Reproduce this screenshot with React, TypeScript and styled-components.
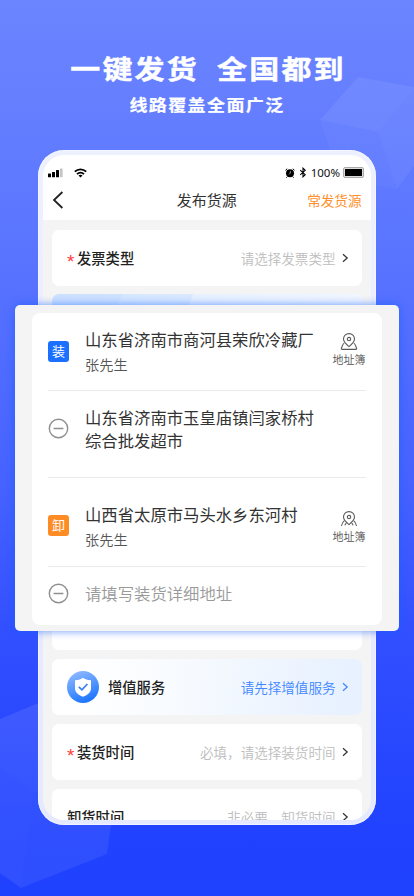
import React from "react";
import styled, { createGlobalStyle } from "styled-components";

const Global = createGlobalStyle`
  *, *::before, *::after { box-sizing: border-box; }
  html, body { margin: 0; padding: 0; }
  body { font-family: "Noto Sans CJK SC", sans-serif; }
`;

const Poster = styled.main`
  position: relative;
  width: 414px;
  height: 896px;
  overflow: hidden;
  display: flex;
  flex-direction: column;
  align-items: center;
  background: linear-gradient(180deg, #6b84ff 0%, #647eff 13%, #5873ff 30%, #4561ff 55%, #3350ff 70%, #2143ff 92%, #1f42ff 100%);
`;

const Backdrop = styled.svg`
  position: absolute;
  inset: 0;
`;

const Heading = styled.header`
  position: relative;
  height: 150px;
  width: 100%;
  padding-top: 49px;
  display: flex;
  flex-direction: column;
  align-items: center;
  color: #fff;
`;

const Title = styled.h1`
  margin: 0;
  display: flex;
  gap: 18px;
  font-size: 30px;
  line-height: 38px;
  font-weight: 700;
  letter-spacing: 2.2px;
  white-space: nowrap;
  transform: translateX(1px) scaleY(0.87);
  -webkit-text-stroke: 0.5px #fff;
`;

const Subtitle = styled.h2`
  margin: 0;
  font-size: 18px;
  line-height: 34px;
  font-weight: 700;
  letter-spacing: 1.4px;
  white-space: nowrap;
  transform: scaleY(0.9);
  -webkit-text-stroke: 0.25px #fff;
`;

const Phone = styled.section`
  position: relative;
  width: 338px;
  height: 675px;
  padding: 5px;
  border-radius: 26px;
  background: linear-gradient(180deg, #edf0ff, #e5e9ff);
  box-shadow: inset 0 0 1px 0.5px rgba(255, 255, 255, 0.85);
`;

const Screen = styled.div`
  height: 100%;
  border-radius: 21px;
  overflow: hidden;
  background: #f4f4f4;
`;

const TopArea = styled.div`
  height: 65px;
  background: #fff;
`;

const StatusBar = styled.div`
  height: 35px;
  padding: 0 7px 0 5px;
  display: flex;
  justify-content: space-between;
  align-items: center;
`;

const StatusGroup = styled.div<{ $gap: number }>`
  display: flex;
  align-items: center;
  gap: ${(p) => p.$gap}px;
  height: 18px;
  font: 11px/18px "Noto Sans", sans-serif;
  color: #111;
  svg { display: block; }
`;

const NavBar = styled.div`
  height: 26px;
  display: grid;
  grid-template-columns: 64px 1fr 64px;
  align-items: center;
  padding: 0 9.5px 0 9px;
  margin-top: -3px;
`;

const NavTitle = styled.div`
  text-align: center;
  font-size: 15px;
  line-height: 24px;
  color: #333;
`;

const NavLink = styled.div`
  font-size: 13.6px;
  line-height: 24px;
  color: #ff8f2c;
  white-space: nowrap;
  justify-self: end;
`;

const Percent = styled.span`
  font-size: 11.5px;
  margin-right: -1px;
`;

const Form = styled.div`
  padding: 10px 9px 0;
  display: flex;
  flex-direction: column;
  gap: 9px;
`;

const Card = styled.div<{ $tint?: boolean }>`
  width: 310px;
  height: 56px;
  flex: none;
  padding: 0 13px 0 15px;
  border-radius: 7px;
  background: ${(p) => (p.$tint ? "linear-gradient(100deg, #fff 10%, #f6faff 45%, #e8f1ff 92%)" : "#fff")};
  display: flex;
  align-items: center;
`;

const RouteCard = styled.div`
  height: 356px;
  margin-top: -1px;
  border-radius: 7px;
  overflow: hidden;
  background: #fff;
  svg { display: block; }
`;

const Star = styled.span`
  width: 10px;
  font-family: "Liberation Sans", sans-serif;
  font-size: 19px;
  line-height: 20px;
  padding-top: 7px;
  color: #ff3b3b;
`;

const Label = styled.span`
  font-size: 14.3px;
  line-height: 22px;
  font-weight: 500;
  color: #222;
`;

const Value = styled.span<{ $blue?: boolean }>`
  margin-left: auto;
  margin-right: 6.5px;
  font-size: 13.55px;
  line-height: 22px;
  font-weight: 350;
  color: ${(p) => (p.$blue ? "#3f87ff" : "#bdbdbd")};
  white-space: pre;
`;

const Shield = styled.svg`
  margin-right: 9px;
  flex: none;
`;

const Overlay = styled.section`
  position: absolute;
  left: 15px;
  top: 305px;
  width: 384px;
  height: 326px;
  padding: 8px 17px 6px;
  border-radius: 5px;
  background: #f4f4f4;
  box-shadow: 0 0 9px rgba(20, 95, 255, 0.65);
`;

const Panel = styled.div`
  height: 312px;
  border-radius: 8px;
  background: #fff;
  padding: 0 16px;
`;

const Stop = styled.div<{ $h: number; $pad: number; $line?: boolean }>`
  height: ${(p) => p.$h}px;
  padding-top: ${(p) => p.$pad}px;
  border-bottom: ${(p) => (p.$line ? "1px solid #ebebeb" : "0")};
  display: grid;
  grid-template-columns: 37px 1fr 34px;
  align-items: start;
`;

const Tag = styled.div<{ $color: string; $top: number }>`
  width: 21px;
  height: 21px;
  margin-top: ${(p) => p.$top}px;
  border-radius: 3px;
  background: ${(p) => p.$color};
  color: #fff;
  font-size: 13px;
  line-height: 20px;
  text-align: center;
`;

const Minus = styled.svg<{ $top: number }>`
  margin-top: ${(p) => p.$top}px;
`;

const Address = styled.div<{ $muted?: boolean }>`
  font-size: 16.35px;
  line-height: 22.5px;
  color: ${(p) => (p.$muted ? "#999" : "#333")};
  font-weight: ${(p) => (p.$muted ? 350 : 400)};
  white-space: nowrap;
`;

const Contact = styled.div`
  margin-top: 2px;
  font-size: 14.2px;
  line-height: 22px;
  font-weight: 350;
  color: #555;
`;

const Book = styled.div<{ $top: number }>`
  margin-top: ${(p) => p.$top}px;
  display: flex;
  flex-direction: column;
  align-items: center;
  font-size: 11px;
  line-height: 18px;
  font-weight: 350;
  color: #555;
  white-space: nowrap;
  svg { display: block; }
`;

const Chevron = ({ color = "#333" }: { color?: string }) => (
  <svg width="7" height="10" viewBox="0 0 7 10" fill="none">
    <path d="M1 1.2 5.2 5 1 8.8" stroke={color} strokeWidth="1.25" />
  </svg>
);

const MinusIcon = ({ top }: { top: number }) => (
  <Minus $top={top} width="21" height="21" viewBox="0 0 21 21" fill="none" stroke="#8f8f8f">
    <circle cx="10.5" cy="10.5" r="9.2" strokeWidth="1.4" />
    <path d="M5.6 10.5h9.8" strokeWidth="1.5" />
  </Minus>
);

const AddressBook = ({ top, open }: { top: number; open?: boolean }) => (
  <Book $top={top}>
    <svg width="18" height={open ? 16 : 17} viewBox={open ? "0 0 18 16" : "0 0 18 17"} fill="none" stroke="#5a5a5a" strokeWidth="1.1">
      <path d="M9 13.6C6.2 11.4 3.5 9 3.5 6.1a5.5 5.5 0 0 1 11 0C14.5 9 11.8 11.4 9 13.6Z" />
      <circle cx="9" cy="6.1" r="1.7" />
      <path d={open ? "M4.4 9.6C2.6 10.8 2.1 12 1.4 15M13.6 9.6c1.8 1.2 2.3 2.4 3 5.4M6.2 12 4.8 14.3M11.8 12l1.4 2.3" : "M4.2 10.2C2.9 10.5 2.5 12 1.4 15.4q-.3 1 .8 1h13.6q1.1 0 .8-1C15.5 12 15.1 10.5 13.8 10.2"} />
    </svg>
    地址簿
  </Book>
);

const Cubes = () => (
  <Backdrop width="414" height="896" viewBox="0 0 414 896" fill="#fff">
    <polygon points="358,77 414,87 414,89 378,132 320,120" opacity="0.07" />
    <polygon points="320,120 378,132 397,189 340,178" opacity="0.03" />
    <polygon points="378,132 414,89 414,166 397,189" opacity="0.055" />
    <polygon points="0,719 60,694 120,760 34,793 0,767" opacity="0.09" />
    <polygon points="0,767 34,793 21,888 0,873" opacity="0.08" />
    <polygon points="34,793 120,760 107,854 21,888" opacity="0.07" />
  </Backdrop>
);

export default function App() {
  return (
    <>
      <Global />
      <Poster>
        <Cubes />
        <Heading>
          <Title><span>一键发货</span><span>全国都到</span></Title>
          <Subtitle>线路覆盖全面广泛</Subtitle>
        </Heading>
        <Phone>
          <Screen>
            <TopArea>
              <StatusBar>
                <StatusGroup $gap={10}>
                  <svg width="16" height="10" viewBox="0 0 16 10">
                    <rect x="0" y="5.5" width="3" height="3.8" rx=".5" />
                    <rect x="4" y="4" width="3" height="5.3" rx=".5" />
                    <rect x="8" y="2" width="3" height="7.3" rx=".5" />
                    <rect x="12" y="0.5" width="2.6" height="8.8" rx=".5" fill="#c4c4c4" />
                  </svg>
                  <svg width="13" height="10" viewBox="0 0 13 10" fill="none" stroke="#000" strokeWidth="1.8">
                    <path d="M.8 3.7c3.2-3.1 8.2-3.1 11.4 0M3 6.1c2-1.9 5-1.9 7 0" />
                    <path d="M4.5 7.5c1.2-1 2.8-1 4 0l-2 2z" fill="#000" stroke="none" />
                  </svg>
                </StatusGroup>
                <StatusGroup $gap={4}>
                  <svg width="10" height="10" viewBox="0 0 10 10">
                    <circle cx="5" cy="5.2" r="4" />
                    <path d="M.5 2.3 2.2.8M9.5 2.3 7.8.8M2.2 8.7l-.8 1M7.8 8.7l.8 1" stroke="#000" strokeWidth="1" />
                    <path d="M5.6 3.2 5 5.4 4 6.4" stroke="#fff" strokeWidth=".6" fill="none" />
                  </svg>
                  <svg width="8" height="11" viewBox="0 0 8 11" fill="none" stroke="#000" strokeWidth="1.1">
                    <path d="m1.2 3.2 5 4.5L4 9.8V1.2l2.2 2.1-5 4.5" />
                  </svg>
                  <Percent>100%</Percent>
                  <svg width="21" height="11" viewBox="0 0 21 11">
                    <rect x=".5" y=".5" width="20" height="10" rx="1.5" fill="#ddd" stroke="#aaa" />
                    <rect x="2" y="2" width="17" height="7" />
                  </svg>
                </StatusGroup>
              </StatusBar>
              <NavBar>
                <svg width="12" height="18" viewBox="0 0 12 18" fill="none">
                  <path d="M10.4 1 2 9l8.4 8" stroke="#222" strokeWidth="1.8" />
                </svg>
                <NavTitle>发布货源</NavTitle>
                <NavLink>常发货源</NavLink>
              </NavBar>
            </TopArea>
            <Form>
              <Card><Star>*</Star><Label>发票类型</Label><Value>请选择发票类型</Value><Chevron /></Card>
              <RouteCard>
                <svg width="310" height="28" viewBox="0 0 310 28">
                  <defs>
                    <linearGradient id="routeHead"><stop stopColor="#d8e8ff" /><stop offset=".45" stopColor="#e7f1ff" /><stop offset="1" stopColor="#f1f6ff" /></linearGradient>
                  </defs>
                  <rect width="310" height="28" fill="url(#routeHead)" />
                  <path d="M0 0H70L60 28H0Z" fill="#c4dcff" opacity=".6" />
                  <path d="M70 0H141L131 28H60Z" fill="#cce1ff" opacity=".5" />
                </svg>
              </RouteCard>
              <Card $tint>
                <Shield width="32" height="32" viewBox="0 0 32 32">
                  <defs>
                    <linearGradient id="badge" x1=".3" y1="0" x2=".7" y2="1"><stop stopColor="#8db8ff" /><stop offset="1" stopColor="#1672ff" /></linearGradient>
                  </defs>
                  <circle cx="16" cy="16" r="16" fill="url(#badge)" />
                  <path d="M16 6.8c2 1.7 4.4 2.4 8 2.4v8c0 4-3 6.5-8 8.5-5-2-8-4.5-8-8.5v-8c3.6 0 6-.7 8-2.4Z" fill="#fff" />
                  <path d="m11.8 15.8 3.1 3 5.5-5.8" fill="none" stroke="#3c82f6" strokeWidth="1.8" />
                </Shield>
                <Label>增值服务</Label><Value $blue>请先择增值服务</Value><Chevron color="#3f87ff" />
              </Card>
              <Card><Star>*</Star><Label>装货时间</Label><Value>必填，请选择装货时间</Value><Chevron /></Card>
              <Card><Label>卸货时间</Label><Value>非必要　卸货时间</Value><Chevron /></Card>
            </Form>
          </Screen>
        </Phone>
        <Overlay>
          <Panel>
            <Stop $h={78} $pad={15} $line>
              <Tag $color="#1b70ff" $top={13}>装</Tag>
              <div><Address>山东省济南市商河县荣欣冷藏厂</Address><Contact>张先生</Contact></div>
              <AddressBook top={5} />
            </Stop>
            <Stop $h={87} $pad={15} $line>
              <MinusIcon top={12} />
              <Address>山东省济南市玉皇庙镇闫家桥村<br />综合批发超市</Address>
            </Stop>
            <Stop $h={89} $pad={25} $line>
              <Tag $color="#ff8b25" $top={12}>卸</Tag>
              <div><Address>山西省太原市马头水乡东河村</Address><Contact>张先生</Contact></div>
              <AddressBook top={8} open />
            </Stop>
            <Stop $h={58} $pad={15}>
              <MinusIcon top={1} />
              <Address $muted>请填写装货详细地址</Address>
            </Stop>
          </Panel>
        </Overlay>
      </Poster>
    </>
  );
}
